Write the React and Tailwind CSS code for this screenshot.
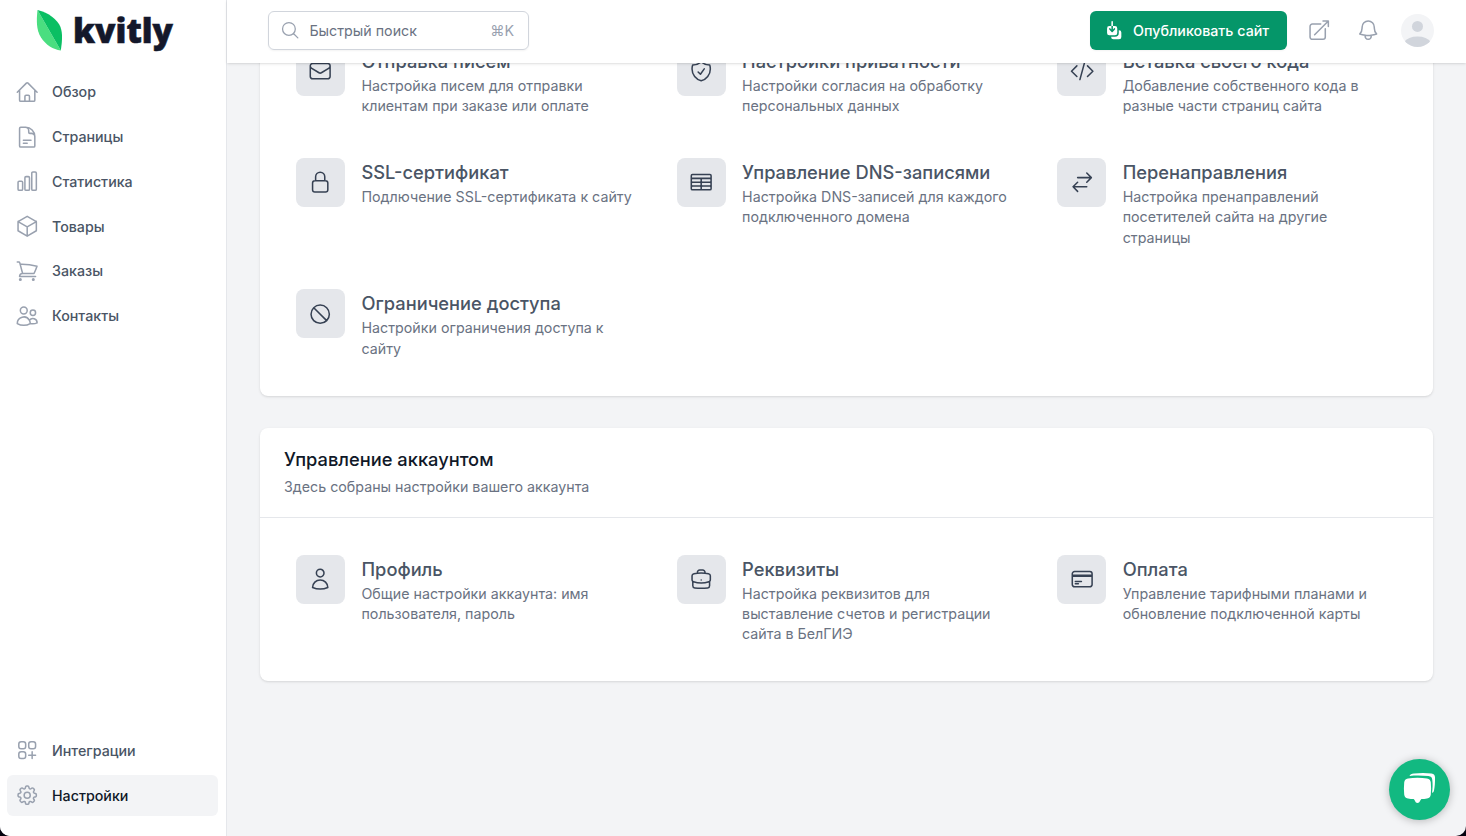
import React from 'react';
import {
  HiOutlineHome,
  HiOutlineDocumentText,
  HiOutlineChartBar,
  HiOutlineCube,
  HiOutlineShoppingCart,
  HiOutlineUsers,
  HiOutlineSquaresPlus,
  HiOutlineCog8Tooth,
  HiOutlineMagnifyingGlass,
  HiOutlineArrowTopRightOnSquare,
  HiOutlineBell,
  HiOutlineEnvelope,
  HiOutlineShieldCheck,
  HiOutlineCodeBracket,
  HiOutlineLockClosed,
  HiOutlineTableCells,
  HiOutlineArrowsRightLeft,
  HiOutlineNoSymbol,
  HiOutlineUser,
  HiOutlineBriefcase,
  HiOutlineCreditCard,
  HiMiniArrowDownOnSquareStack,
} from 'react-icons/hi2';

const mainNav = [
  { label: 'Обзор', icon: HiOutlineHome },
  { label: 'Страницы', icon: HiOutlineDocumentText },
  { label: 'Статистика', icon: HiOutlineChartBar },
  { label: 'Товары', icon: HiOutlineCube },
  { label: 'Заказы', icon: HiOutlineShoppingCart },
  { label: 'Контакты', icon: HiOutlineUsers },
];

const bottomNav = [
  { label: 'Интеграции', icon: HiOutlineSquaresPlus },
  { label: 'Настройки', icon: HiOutlineCog8Tooth, active: true },
];

const siteSettings = [
  { title: 'Отправка писем', text: 'Настройка писем для отправки клиентам при заказе или оплате', icon: HiOutlineEnvelope },
  { title: 'Настройки приватности', text: 'Настройки согласия на обработку персональных данных', icon: HiOutlineShieldCheck },
  { title: 'Вставка своего кода', text: 'Добавление собственного кода в разные части страниц сайта', icon: HiOutlineCodeBracket },
  { title: 'SSL-сертификат', text: 'Подлючение SSL-сертификата к сайту', icon: HiOutlineLockClosed },
  { title: 'Управление DNS-записями', text: 'Настройка DNS-записей для каждого подключенного домена', icon: HiOutlineTableCells },
  { title: 'Перенаправления', text: 'Настройка пренаправлений посетителей сайта на другие страницы', icon: HiOutlineArrowsRightLeft },
  { title: 'Ограничение доступа', text: 'Настройки ограничения доступа к сайту', icon: HiOutlineNoSymbol },
];

const accountSettings = [
  { title: 'Профиль', text: 'Общие настройки аккаунта: имя пользователя, пароль', icon: HiOutlineUser },
  { title: 'Реквизиты', text: 'Настройка реквизитов для выставление счетов и регистрации сайта в БелГИЭ', icon: HiOutlineBriefcase },
  { title: 'Оплата', text: 'Управление тарифными планами и обновление подключенной карты', icon: HiOutlineCreditCard },
];

function Logo() {
  return (
    <svg className="mt-2 ml-9 h-12 w-[140px] shrink-0 overflow-visible" viewBox="0 0 140 48">
      <path d="M1.500 2C0.500 11 0 22 5 29.500C10 37 17 41.500 24.800 42.500Z" fill="#4ade80" />
      <path d="M1.500 2C13 5 21 11 24.500 19C27 26 26 34 24.800 42.500Z" fill="#0abf63" />
      <text
        x="37"
        y="34.500"
        fontSize="34"
        fontWeight="900"
        textLength="100"
        lengthAdjust="spacingAndGlyphs"
        fill="#14182b"
        stroke="#14182b"
        strokeWidth="0.600"
        fontFamily="'Noto Sans', 'Open Sans', sans-serif"
      >
        kvitly
      </text>
    </svg>
  );
}

function NavItem({ item }) {
  const Icon = item.icon;
  return (
    <a
      className={`flex h-[40.7px] items-center gap-[12.2px] rounded-md px-[8.2px] text-[14.25px] font-medium ${
        item.active ? 'bg-gray-100 text-gray-900' : 'text-gray-600'
      }`}
    >
      <Icon className="size-[24.4px] shrink-0 text-gray-400" />
      {item.label}
    </a>
  );
}

function Sidebar() {
  return (
    <aside className="flex w-[227px] shrink-0 flex-col border-r border-gray-200 bg-white">
      <Logo />
      <nav className="mt-[15.7px] flex flex-col gap-[4.1px] pr-2 pl-[7.2px]">
        {mainNav.map((item) => (
          <NavItem key={item.label} item={item} />
        ))}
      </nav>
      <nav className="mt-auto flex flex-col gap-[4.1px] pr-2 pb-[20.3px] pl-[7.2px]">
        {bottomNav.map((item) => (
          <NavItem key={item.label} item={item} />
        ))}
      </nav>
    </aside>
  );
}

function Avatar() {
  return (
    <svg className="size-[33px] text-gray-300" viewBox="0 0 24 24" fill="currentColor">
      <clipPath id="avatar">
        <circle cx="12" cy="12" r="12" />
      </clipPath>
      <g clipPath="url(#avatar)">
        <rect width="24" height="24" className="fill-gray-100" />
        <circle cx="12" cy="9" r="4" />
        <path d="M2 20.500a11.500 8 0 0 1 20 0V25H2Z" />
      </g>
    </svg>
  );
}

function Header() {
  return (
    <header className="relative z-10 flex h-[63px] shrink-0 items-center bg-white pr-8 pl-[41px] pb-[2px] shadow">
      <div className="flex h-[39px] w-[261px] items-center rounded-md border border-gray-300 pr-[14px] pl-[11px] text-[14.25px] shadow-xs">
        <HiOutlineMagnifyingGlass className="size-[20.4px] text-gray-400" />
        <span className="ml-[9px] text-gray-500">Быстрый поиск</span>
        <span className="ml-auto text-gray-400">⌘K</span>
      </div>
      <button className="ml-auto flex h-[39px] w-[197.5px] items-center rounded-md bg-[#059669] pl-[14.5px] text-[14.25px] font-medium text-white shadow-xs">
        <HiMiniArrowDownOnSquareStack className="mr-[8.5px] size-[20.4px]" />
        Опубликовать сайт
      </button>
      <HiOutlineArrowTopRightOnSquare className="ml-5 size-[24.4px] text-gray-400" />
      <HiOutlineBell className="ml-6 size-[24.4px] text-gray-400" />
      <div className="ml-[21px]">
        <Avatar />
      </div>
    </header>
  );
}

function SettingsGrid({ items }) {
  return (
    <div className="grid grid-cols-3 gap-[17px] p-[24.4px]">
      {items.map(({ title, text, icon: Icon }) => (
        <a key={title} className="flex gap-[16.3px] p-[12.2px]">
          <div className="flex size-[49px] shrink-0 items-center justify-center rounded-lg bg-gray-200 text-gray-700">
            <Icon className="size-[24.4px]" />
          </div>
          <div>
            <h3 className="text-[18.3px] leading-[29px] font-medium text-gray-600">{title}</h3>
            <p className="text-[14.25px] leading-[20.4px] text-gray-500">{text}</p>
          </div>
        </a>
      ))}
    </div>
  );
}

function ChatButton() {
  return (
    <button className="absolute right-4 bottom-4 flex size-[61.5px] items-center justify-center rounded-full bg-[#12b981] shadow-[0_1px_8px_rgba(0,0,0,0.25)]">
      <svg className="mb-[2px] size-[34px]" viewBox="0 0 34 34" fill="white">
        <path d="M7.500 5C8 3 9.500 2.700 12 2.400C18 1.700 24 1.700 29.500 2.400C32 2.700 33 4 33 6.500C33.100 12 32.800 16 32 19.500C31.700 21 31 21.500 30 22C30.700 17 30.800 13 30.300 9C30 6.300 29 5.500 26.500 5.100C20 4.400 13.500 4.300 7.500 5Z" />
        <path d="M6 7.500C12 6.500 19 6.500 25 7.500C27.500 7.900 28.500 9 28.800 11.500C29.200 15.500 29.200 19.500 28.800 23.500C28.500 26 27.500 27 25 27.400C23 27.700 21.300 27.900 19.500 28C18.500 28.200 18 32 15.500 32C13 32 12.800 28.200 11.500 28C9.600 27.900 8 27.700 6 27.400C3.500 27 2.500 26 2.200 23.500C1.800 19.500 1.800 15.500 2.200 11.500C2.500 9 3.500 7.900 6 7.500Z" />
      </svg>
    </button>
  );
}

export default function App() {
  return (
    <div className="h-screen bg-[#05030f] font-['Inter',sans-serif]">
      <div className="relative flex h-full overflow-hidden rounded-b-[10px] bg-gray-100">
        <Sidebar />
        <div className="flex min-w-0 flex-1 flex-col">
          <Header />
          <main className="flex-1 overflow-hidden pr-[32.8px] pl-[32.6px]">
            {/* Page is scrolled down, the first card continues under the header */}
            <section className="-mt-[53px] rounded-lg bg-white shadow">
              <SettingsGrid items={siteSettings} />
            </section>
            <section className="mt-[32.6px] rounded-lg bg-white shadow">
              <div className="border-b border-gray-200 px-[24.4px] pt-[19px] pb-[19.8px]">
                <h2 className="text-[18.3px] leading-[24.4px] font-medium text-gray-900">
                  Управление аккаунтом
                </h2>
                <p className="mt-[5px] text-[14.25px] leading-[20.4px] text-gray-500">
                  Здесь собраны настройки вашего аккаунта
                </p>
              </div>
              <SettingsGrid items={accountSettings} />
            </section>
          </main>
        </div>
        <ChatButton />
      </div>
    </div>
  );
}
